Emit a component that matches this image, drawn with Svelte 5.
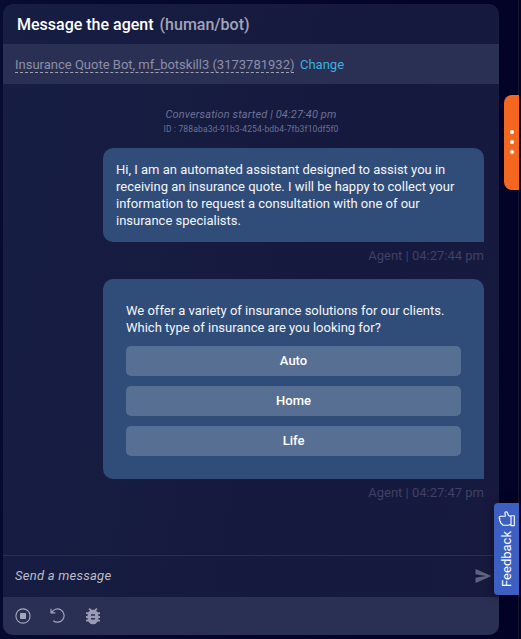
<script>
  const choices = ['Auto', 'Home', 'Life'];
</script>

<main>
  <section class="panel">
    <header><strong>Message the agent</strong><span>(human/bot)</span></header>
    <div class="skill"><span class="bot">Insurance Quote Bot, mf_botskill3 (3173781932)</span><a href="#change">Change</a></div>
    <div class="chat">
      <div class="started">Conversation started | 04:27:40 pm</div>
      <div class="cid">ID : 788aba3d-91b3-4254-bdb4-7fb3f10df5f0</div>
      <div class="bubble first">
        Hi, I am an automated assistant designed to assist you in<br />receiving an insurance quote. I will be happy to collect your<br />information to request a consultation with one of our<br />insurance specialists.
      </div>
      <div class="stamp">Agent | 04:27:44 pm</div>
      <div class="bubble second">
        We offer a variety of insurance solutions for our clients.<br />Which type of insurance are you looking for?
        <div class="choices">
          {#each choices as choice}
            <button>{choice}</button>
          {/each}
        </div>
      </div>
      <div class="stamp">Agent | 04:27:47 pm</div>
    </div>
    <div class="compose">
      <span>Send a message</span>
      <svg width="17" height="16" viewBox="0 0 17 16"><path d="M.5 0 16.500 7 .5 14V8.700L11 7 .5 5.300Z" fill="#60637f" /></svg>
    </div>
    <footer>
      <svg width="16" height="16" viewBox="0 0 16 16"><circle cx="8" cy="8" r="7.100" fill="none" stroke="#a4a7bc" stroke-width="1.100" /><rect x="5" y="5" width="6" height="6" rx=".7" fill="#a4a7bc" /></svg>
      <svg class="undo" width="16" height="16" viewBox="0 0 16 16"><path d="M1.500 4.700A6.600 6.600 0 1 1 3.300 12.700M1 .8V4.900H5.300" fill="none" stroke="#a4a7bc" stroke-width="1.150" /></svg>
      <svg class="bug" width="16" height="17" viewBox="0 0 16 17"><path fill="#989bb2" fill-rule="evenodd" d="M15 4.200h-2.500a5 5 0 0 0-1.500-1.700L12.600 1.200 11.400 0 9.400 1.800a6 6 0 0 0-2.800 0L4.600 0 3.400 1.200 5 2.500A5 5 0 0 0 3.500 4.200H1v1.900h1.600V8H1v1.900h1.600v1.800H1v1.900h2.300a5.400 5.400 0 0 0 9.400 0H15v-1.900h-1.600V9.900H15V8h-1.600V6.100H15ZM6 6.200h4v1.600H6Zm0 3.700h4v1.600H6Z" /></svg>
    </footer>
  </section>
  <div class="rail"></div>
  <div class="menu"><i></i><i></i><i></i></div>
  <div class="feedback">
    <svg width="18" height="16" viewBox="0 0 18 16"><path d="M13 5.500 10.500 4.500 9.300 1.500C8.800.3 7 .5 6.900 1.800L7.400 5.300H2.500C.8 5.400.8 7.500 2 7.800 1.200 8.700 1.500 10 2.600 10.300 2.100 11.300 2.600 12.500 3.800 12.600 3.800 13.700 4.600 14.300 5.600 14.300H10.500L13 13.300M13 4.800H16.300V14.600H13Z" fill="none" stroke="white" stroke-width="1.100" stroke-linejoin="round" /></svg>
    <span>Feedback</span>
  </div>
</main>

<style>
  :global(body) { margin: 0; }
  main {
    position: relative;
    box-sizing: border-box;
    width: 521px;
    height: 639px;
    padding: 4px 22px 4px 3px;
    overflow: hidden;
    background: linear-gradient(100deg, #080c32, #030427 65%, #020226);
    font-family: Roboto, "Liberation Sans", sans-serif;
    white-space: nowrap;
  }
  .panel {
    display: flex;
    flex-direction: column;
    width: 496px;
    height: 631px;
    overflow: hidden;
    border-radius: 10px;
    background: linear-gradient(100deg, #171e43, #16193e 60%, #17193e);
  }
  header {
    display: flex;
    gap: 6px;
    height: 40px;
    padding-left: 14px;
    line-height: 42px;
    font-size: 16px;
    color: #fff;
  }
  header strong { font-weight: 500; }
  header span { color: #a2a5b9; font-weight: 500; }
  .skill {
    display: flex;
    align-items: flex-start;
    box-sizing: border-box;
    height: 40px;
    padding: 13px 0 0 12px;
    background: #2a2f54;
    font-size: 13px;
    line-height: 15px;
  }
  .bot { color: #8c8fa6; border-bottom: 1px dashed #a1a4b5; }
  a { margin-left: 5.500px; color: #3bb1df; text-decoration: none; }
  .chat { box-sizing: border-box; height: 471px; padding: 23px 15px 0 100px; }
  .started, .cid { width: 296px; color: #6b7297; text-align: center; }
  .started { height: 15px; font-size: 11px; line-height: 15px; font-style: italic; letter-spacing: .13px; }
  .cid { height: 26px; font-size: 8.500px; line-height: 14px; letter-spacing: .15px; }
  .bubble {
    box-sizing: border-box;
    width: 381px;
    border-radius: 10px 10px 0 10px;
    background: #304c79;
    color: #f4f6fb;
    font-size: 13px;
    line-height: 17px;
  }
  .first { height: 94px; padding: 13px; }
  .second { height: 200px; padding: 23px; }
  .stamp { height: 37px; line-height: 28px; text-align: right; font-size: 13px; color: #3e4265; }
  .choices { display: grid; gap: 10px; padding-top: 10px; }
  button {
    height: 30px;
    padding: 0;
    border: 0;
    border-radius: 5px;
    background: #586f94;
    color: #fff;
    font: 500 13px/30px Roboto, sans-serif;
  }
  .compose {
    display: flex;
    align-items: center;
    justify-content: space-between;
    box-sizing: border-box;
    height: 42px;
    padding: 0 7px 0 12px;
    border-top: 1px solid #292f54;
    font-size: 13px;
    font-style: italic;
    letter-spacing: .25px;
    color: #bebec7;
  }
  .compose span { padding-bottom: 2px; }
  footer { display: flex; align-items: center; gap: 19px; height: 38px; padding: 0 11.500px; background: #2a2f54; }
  .rail { position: absolute; top: 0; bottom: 0; right: 2px; width: 1px; background: #15152d; }
  .menu {
    position: absolute;
    top: 95px;
    right: 2px;
    display: flex;
    flex-direction: column;
    align-items: center;
    justify-content: center;
    gap: 6px;
    box-sizing: border-box;
    width: 15px;
    height: 95px;
    padding-bottom: 1px;
    border-radius: 8px 0 0 8px;
    background: #f36720;
  }
  i { width: 4px; height: 4px; border-radius: 50%; background: #fff; }
  .feedback {
    position: absolute;
    top: 503px;
    right: 2px;
    display: flex;
    flex-direction: column;
    align-items: center;
    gap: 4px;
    box-sizing: border-box;
    width: 25px;
    height: 92px;
    padding-top: 8px;
    border-radius: 4px 0 0 4px;
    background: #3c60c2;
    box-shadow: 0 0 8px #0007;
    color: #fff;
  }
  .feedback span { writing-mode: vertical-rl; transform: rotate(180deg); font-size: 13px; line-height: 16px; }
</style>
